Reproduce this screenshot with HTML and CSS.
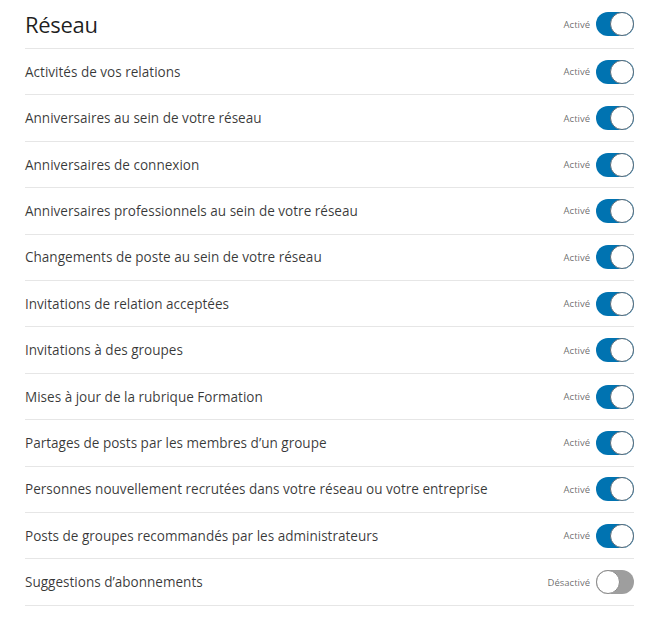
FILE: index.html
```html
<!DOCTYPE html>
<html lang="fr">
<head>
<meta charset="utf-8">
<link rel="stylesheet" href="styles.css">
</head>
<body>
<div class="panel">
  <div class="row head">
    <h1 class="title">Réseau</h1>
    <div class="ctl"><span class="state">Activé</span><span class="switch on"></span></div>
  </div>
  <div class="row"><span class="label">Activités de vos relations</span><div class="ctl"><span class="state">Activé</span><span class="switch on"></span></div></div>
  <div class="row"><span class="label">Anniversaires au sein de votre réseau</span><div class="ctl"><span class="state">Activé</span><span class="switch on"></span></div></div>
  <div class="row"><span class="label">Anniversaires de connexion</span><div class="ctl"><span class="state">Activé</span><span class="switch on"></span></div></div>
  <div class="row"><span class="label">Anniversaires professionnels au sein de votre réseau</span><div class="ctl"><span class="state">Activé</span><span class="switch on"></span></div></div>
  <div class="row"><span class="label">Changements de poste au sein de votre réseau</span><div class="ctl"><span class="state">Activé</span><span class="switch on"></span></div></div>
  <div class="row"><span class="label">Invitations de relation acceptées</span><div class="ctl"><span class="state">Activé</span><span class="switch on"></span></div></div>
  <div class="row"><span class="label">Invitations à des groupes</span><div class="ctl"><span class="state">Activé</span><span class="switch on"></span></div></div>
  <div class="row"><span class="label">Mises à jour de la rubrique Formation</span><div class="ctl"><span class="state">Activé</span><span class="switch on"></span></div></div>
  <div class="row"><span class="label">Partages de posts par les membres d’un groupe</span><div class="ctl"><span class="state">Activé</span><span class="switch on"></span></div></div>
  <div class="row"><span class="label">Personnes nouvellement recrutées dans votre réseau ou votre entreprise</span><div class="ctl"><span class="state">Activé</span><span class="switch on"></span></div></div>
  <div class="row"><span class="label">Posts de groupes recommandés par les administrateurs</span><div class="ctl"><span class="state">Activé</span><span class="switch on"></span></div></div>
  <div class="row"><span class="label">Suggestions d’abonnements</span><div class="ctl"><span class="state">Désactivé</span><span class="switch off"></span></div></div>
</div>
</body>
</html>
```
FILE: styles.css
```css
html, body { margin: 0; padding: 0; background: #fff; }
body { font-family: "Open Sans", "Noto Sans", sans-serif; color: rgba(0,0,0,0.8); }
.panel { width: 609px; margin-left: 25px; }
.row {
  display: flex; align-items: center; justify-content: space-between;
  border-bottom: 1px solid #e6e6e6; box-sizing: border-box;
  height: 46.42px;
}
.row.head { height: 49px; }
.title { margin: 0; font-size: 22px; font-weight: 400; color: rgba(0,0,0,0.88); letter-spacing: -0.3px; }
.label { font-size: 13.55px; color: rgba(0,0,0,0.78); }
.ctl { display: flex; align-items: center; gap: 6px; }
.state { font-size: 9.5px; color: rgba(0,0,0,0.6); }
.switch { position: relative; width: 38px; height: 24px; border-radius: 12px; box-sizing: border-box; }
.switch.on { background: #0073b1; }
.switch.off { background: #9e9e9e; }
.switch::after {
  content: ""; position: absolute; top: 0; width: 24px; height: 24px; border-radius: 50%;
  background: #fff; box-sizing: border-box; border: 1.5px solid #5a6b78;
}
.switch.on::after { right: 0; }
.switch.off::after { left: 0; border-color: #8a8a8a; }
```
